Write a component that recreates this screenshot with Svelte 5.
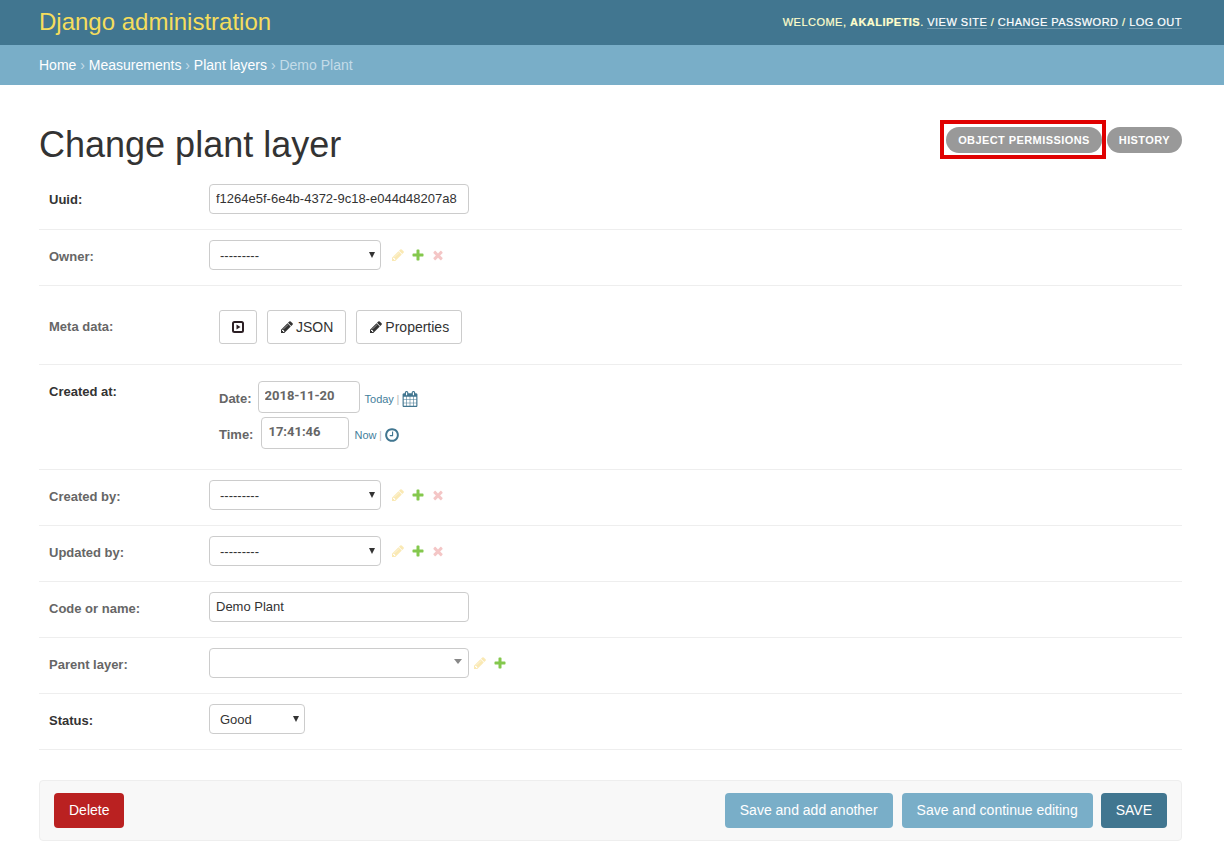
<script lang="ts">
	const P_CHANGE = 'M491 1536l91-91-235-235-91 91v107h128v128h107zm523-928q0-22-22-22-10 0-17 7l-542 542q-7 7-7 17 0 22 22 22 10 0 17-7l542-542q7-7 7-17zm-54-192l416 416-832 832h-416v-416zm683 96q0 53-37 90l-166 166-416-416 166-165q36-38 90-38 53 0 91 38l235 234q37 39 37 91z';
	const P_ADD = 'M1600 796v192q0 40-28 68t-68 28h-416v416q0 40-28 68t-68 28h-192q-40 0-68-28t-28-68v-416h-416q-40 0-68-28t-28-68v-192q0-40 28-68t68-28h416v-416q0-40 28-68t68-28h192q40 0 68 28t28 68v416h416q40 0 68 28t28 68z';
	const P_DEL = 'M1490 1322q0 40-28 68l-136 136q-28 28-68 28t-68-28l-294-294-294 294q-28 28-68 28t-68-28l-136-136q-28-28-28-68t28-68l294-294-294-294q-28-28-28-68t28-68l136-136q28-28 68-28t68 28l294 294 294-294q28-28 68-28t68 28l136 136q28 28 28 68t-28 68l-294 294 294 294q28 28 28 68z';
	const P_CLOCK = 'M1024 544v448q0 14-9 23t-23 9h-320q-14 0-23-9t-9-23v-64q0-14 9-23t23-9h224v-352q0-14 9-23t23-9h64q14 0 23 9t9 23zm416 352q0-148-73-273t-198-198-273-73-273 73-198 198-73 273 73 273 198 198 273 73 273-73 198-198 73-273zm224 0q0 209-103 385.5t-279.5 279.5-385.5 103-385.5-103-279.5-279.5-103-385.5 103-385.5 279.5-279.5 385.5-103 385.5 103 279.5 279.5 103 385.5z';
	const P_CAL = 'M192 1664h288v-288h-288v288zm352 0h320v-288h-320v288zm-352-352h288v-320h-288v320zm352 0h320v-320h-320v320zm-352-384h288v-288h-288v288zm736 736h320v-288h-320v288zm-384-736h320v-288h-320v288zm768 736h288v-288h-288v288zm-384-352h320v-320h-320v320zm-352-864v-288q0-13-9.5-22.5t-22.5-9.5h-64q-13 0-22.5 9.5t-9.5 22.5v288q0 13 9.5 22.5t22.5 9.5h64q13 0 22.5-9.5t9.5-22.5zm736 864h288v-320h-288v320zm-384-384h320v-288h-320v288zm384 0h288v-288h-288v288zm32-480v-288q0-13-9.5-22.5t-22.5-9.5h-64q-13 0-22.5 9.5t-9.5 22.5v288q0 13 9.5 22.5t22.5 9.5h64q13 0 22.5-9.5t9.5-22.5zm384-64v1280q0 52-38 90t-90 38h-1408q-52 0-90-38t-38-90v-1280q0-52 38-90t90-38h128v-96q0-66 47-113t113-47h64q66 0 113 47t47 113v96h384v-96q0-66 47-113t113-47h64q66 0 113 47t47 113v96h128q52 0 90 38t38 90z';
</script>

{#snippet icon(d: string, size: number, color: string)}
	<svg class="icon" width={size} height={size} viewBox="0 0 1792 1792" fill={color}><path {d} /></svg>
{/snippet}

{#snippet rel(del: boolean)}
	<span class="related">
		<span class="faded">{@render icon(P_CHANGE, 14, '#efb80b')}</span>
		{@render icon(P_ADD, 14, '#84c84d')}
		{#if del}<span class="faded">{@render icon(P_DEL, 14, '#dd4646')}</span>{/if}
	</span>
{/snippet}

{#snippet pick(value: string, cls: string)}
	<span class="select-wrap {cls}">
		<select><option>{value}</option></select>
	</span>
{/snippet}

<div class="page">
	<header>
		<div class="brand">Django administration</div>
		<div class="user-tools">
			Welcome, <strong>akalipetis</strong>.
			<a href="#v">View site</a> / <a href="#c">Change password</a> / <a href="#l">Log out</a>
		</div>
	</header>
	<nav class="crumbs">
		<a href="#h">Home</a> › <a href="#m">Measurements</a> › <a href="#p">Plant layers</a> › Demo Plant
	</nav>

	<main>
		<div class="title-row">
			<h1>Change plant layer</h1>
			<ul class="object-tools">
				<li class="marked"><a href="#o">Object permissions</a></li>
				<li><a href="#hi">History</a></li>
			</ul>
		</div>

		<form>
			<div class="row first">
				<label class="required" for="uuid">Uuid:</label>
				<input id="uuid" class="text" value="f1264e5f-6e4b-4372-9c18-e044d48207a8" />
			</div>
			<div class="row">
				<span class="label">Owner:</span>
				{@render pick('---------', 'fk')}
				{@render rel(true)}
			</div>
			<div class="row meta">
				<span class="label">Meta data:</span>
				<div class="meta-buttons">
					<button type="button" class="tool play" aria-label="Run">
						<svg width="14" height="14" viewBox="0 0 14 14">
							<rect x="2" y="2" width="10" height="10" rx="1.5" fill="none" stroke="#2c1f24" stroke-width="2" />
							<path d="M5.5 4.5v5l4-2.5z" fill="#2c1f24" />
						</svg>
					</button>
					<button type="button" class="tool">
						{@render icon(P_CHANGE, 14, '#333')}
						JSON
					</button>
					<button type="button" class="tool">
						{@render icon(P_CHANGE, 14, '#333')}
						Properties
					</button>
				</div>
			</div>
			<div class="row created">
				<span class="label required">Created at:</span>
				<div class="datetime">
					<div class="dt-line">
						<span class="dt-label date">Date:</span>
						<input class="vdate" value="2018-11-20" />
						<span class="shortcuts"><a href="#t">Today</a> <span class="sep">|</span> {@render icon(P_CAL, 16, '#417690')}</span>
					</div>
					<div class="dt-line">
						<span class="dt-label">Time:</span>
						<input class="vtime" value="17:41:46" />
						<span class="shortcuts"><a href="#n">Now</a> <span class="sep">|</span> {@render icon(P_CLOCK, 16, '#417690')}</span>
					</div>
				</div>
			</div>
			<div class="row">
				<span class="label">Created by:</span>
				{@render pick('---------', 'fk')}
				{@render rel(true)}
			</div>
			<div class="row">
				<span class="label">Updated by:</span>
				{@render pick('---------', 'fk')}
				{@render rel(true)}
			</div>
			<div class="row">
				<label for="code">Code or name:</label>
				<input id="code" class="text" value="Demo Plant" />
			</div>
			<div class="row">
				<span class="label">Parent layer:</span>
				{@render pick('', 'parent')}
				{@render rel(false)}
			</div>
			<div class="row">
				<span class="label required">Status:</span>
				{@render pick('Good', 'status')}
			</div>

			<div class="submit-row">
				<button type="button" class="delete">Delete</button>
				<div class="save-group">
					<button type="button" class="save add">Save and add another</button>
					<button type="button" class="save">Save and continue editing</button>
					<button type="button" class="save default">SAVE</button>
				</div>
			</div>
		</form>
	</main>
</div>

<style>
	:global(body) {
		background: #fff;
		overflow: hidden;
	}

	.page {
		font-family: 'Liberation Sans', Arial, sans-serif;
		font-size: 14px;
		color: #333;
		height: 841px;
		overflow: hidden;
	}

	header {
		height: 45px;
		box-sizing: border-box;
		background: #417690;
		padding: 0 42px 2px 39px;
		display: flex;
		align-items: center;
		justify-content: space-between;
	}

	.brand {
		font-size: 24px;
		color: #f5dd5d;
	}

	.user-tools {
		font-size: 11px;
		letter-spacing: 0.48px;
		text-transform: uppercase;
		color: #ffc;
		white-space: pre-wrap;
		-webkit-text-stroke: 0.2px currentColor;
	}

	.user-tools a {
		color: #fff;
		text-decoration: none;
		border-bottom: 1px solid rgba(255, 255, 255, 0.25);
	}

	.crumbs {
		height: 40px;
		box-sizing: border-box;
		background: #79aec8;
		padding: 0 39px;
		display: flex;
		align-items: center;
		white-space: pre;
		color: #c4dce8;
	}

	.crumbs a {
		color: #fff;
		text-decoration: none;
	}

	main {
		padding: 0 42px 0 39px;
	}

	.title-row {
		display: flex;
		justify-content: space-between;
		align-items: flex-start;
		padding-top: 38px;
		height: 99px;
		box-sizing: border-box;
	}

	h1 {
		margin: 0;
		font-size: 36px;
		font-weight: 300;
		line-height: 44px;
		color: #333;
	}

	.object-tools {
		list-style: none;
		margin: 4px 0 0;
		padding: 0;
		display: flex;
		gap: 5px;
	}

	.object-tools li {
		position: relative;
	}

	.object-tools a {
		display: block;
		height: 26px;
		line-height: 26px;
		padding: 0 12px;
		border-radius: 13px;
		background: #999;
		color: #fff;
		font-size: 11px;
		font-weight: 700;
		letter-spacing: 0.42px;
		text-transform: uppercase;
		text-decoration: none;
	}

	.marked::after {
		content: '';
		position: absolute;
		inset: -7px -4px -6px -6px;
		border: 4px solid #e00000;
	}

	.row {
		display: flex;
		align-items: center;
		padding: 10px 10px 15px;
		border-bottom: 1px solid #eee;
		min-height: 30px;
	}

	.row.first {
		padding-top: 0;
	}

	.row.meta {
		padding: 24px 10px 20px;
	}

	.row.created {
		align-items: flex-start;
		padding: 16px 10px 20px;
	}

	.row.created .label {
		margin-top: 3px;
	}

	label,
	.label {
		width: 160px;
		flex: none;
		font-size: 13px;
		font-weight: 700;
		color: #666;
		margin-top: 2px;
	}

	.row.first label {
		margin-top: 0;
	}

	.row.meta .label {
		margin-top: -2px;
	}

	.required {
		color: #333;
	}

	input {
		font-family: inherit;
		color: #333;
		box-sizing: border-box;
		border: 1px solid #ccc;
		border-radius: 4px;
		outline: none;
		background: #fff;
	}

	.text {
		width: 260px;
		height: 30px;
		padding: 0 6px 2px;
		font-size: 13px;
	}

	.select-wrap {
		position: relative;
		display: block;
		flex: none;
		height: 30px;
	}

	.select-wrap::after {
		content: '';
		position: absolute;
		right: 6px;
		top: 12px;
		border-style: solid;
		border-width: 6px 3.5px 0;
		border-color: #333 transparent transparent;
		pointer-events: none;
	}

	.select-wrap.parent::after {
		right: 7px;
		top: 11px;
		border-width: 5px 4px 0;
		border-top-color: #888;
	}

	.select-wrap select {
		appearance: none;
		box-sizing: border-box;
		display: block;
		width: 100%;
		height: 30px;
		padding: 0 10px;
		border: 1px solid #ccc;
		border-radius: 4px;
		background: #fff;
		font-family: inherit;
		font-size: 13px;
		color: #333;
	}

	.fk {
		width: 172px;
	}

	.parent {
		width: 260px;
	}

	.status {
		width: 96px;
	}

	.icon {
		display: block;
		flex: none;
	}

	.related {
		display: flex;
		align-items: center;
		gap: 6px;
		margin-left: 10px;
	}

	.parent + .related {
		margin-left: 4px;
	}

	.faded {
		opacity: 0.3;
		display: block;
	}

	.meta-buttons {
		display: flex;
		gap: 10px;
		margin-left: 10px;
	}

	.tool {
		display: flex;
		align-items: center;
		gap: 2px;
		height: 34px;
		padding: 0 12px;
		box-sizing: border-box;
		border: 1px solid #ccc;
		border-radius: 3px;
		background: #fff;
		font-family: inherit;
		font-size: 14px;
		color: #333;
	}

	.tool.play {
		width: 38px;
		justify-content: center;
		padding: 0;
	}

	.datetime {
		margin-left: 10px;
		display: flex;
		flex-direction: column;
		gap: 4px;
	}

	.dt-line {
		display: flex;
		align-items: center;
	}

	.dt-label {
		font-size: 13px;
		font-weight: 700;
		color: #666;
		margin: 2px 8px 0 0;
	}

	.dt-label.date {
		margin-right: 6px;
	}

	.vdate,
	.vtime {
		height: 32px;
		padding: 0 6px 4px;
		font-family: Roboto, sans-serif;
		font-size: 13px;
		font-weight: 700;
		letter-spacing: 0;
		color: #666;
	}

	.vdate {
		width: 102px;
	}

	.vtime {
		width: 88px;
	}

	.shortcuts {
		display: flex;
		align-items: center;
		gap: 2.5px;
		margin: 4px 0 0 5px;
		font-size: 11px;
		white-space: pre;
	}

	.shortcuts a {
		color: #447e9b;
		text-decoration: none;
	}

	.sep {
		color: #bbb;
	}

	.submit-row {
		margin-top: 30px;
		display: flex;
		justify-content: space-between;
		align-items: center;
		height: 61px;
		box-sizing: border-box;
		padding: 0 14px;
		background: #f8f8f8;
		border: 1px solid #eee;
		border-radius: 4px;
	}

	.submit-row button {
		height: 35px;
		border: none;
		border-radius: 4px;
		font-family: inherit;
		font-size: 14px;
		color: #fff;
		padding: 0 15px 2px;
	}

	.delete {
		background: #ba2121;
	}

	.save-group {
		display: flex;
		gap: 8px;
	}

	.save {
		background: #79aec8;
	}

	.save.add {
		margin-right: 1px;
	}

	.save.default {
		background: #417690;
	}
</style>
